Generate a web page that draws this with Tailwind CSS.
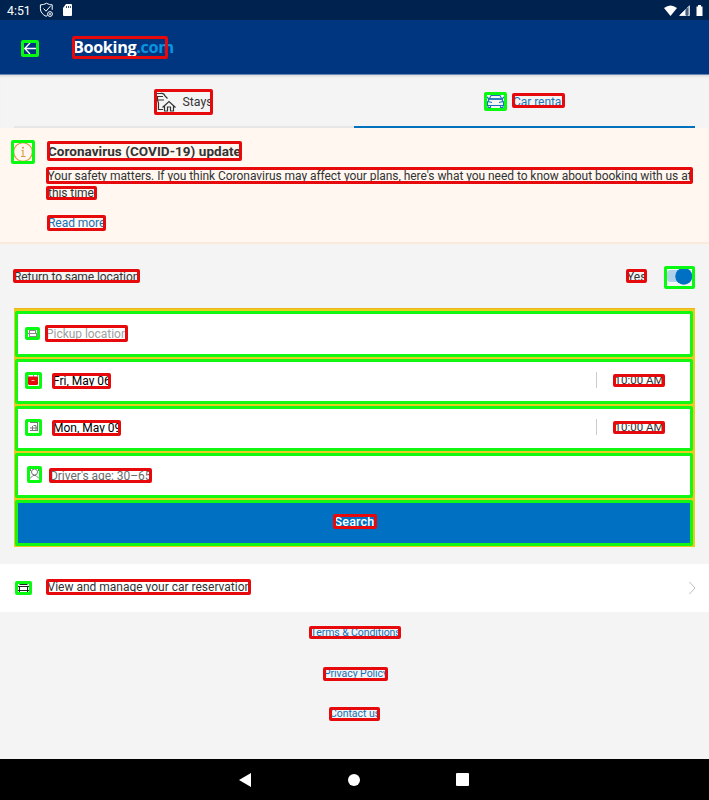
<!DOCTYPE html>
<html lang="en">
<head>
<meta charset="utf-8">
<title>Booking.com</title>
<script src="https://cdn.jsdelivr.net/npm/@tailwindcss/browser@4"></script>
</head>
<body class="w-[709px] h-[800px] overflow-hidden flex flex-col bg-[#f4f4f4] font-[Roboto,sans-serif] text-[12px] text-[#333] leading-none whitespace-nowrap">
<div class="h-5 shrink-0 bg-[#00224f] flex items-center text-white pl-[7px] pr-[6px]">
  <span class="text-[12.3px] w-[32px] pt-[2px]">4:51</span>
  <svg class="w-4 h-4" viewBox="0 0 16 16" fill="none" stroke="#fff" stroke-width="1"><path d="M7.5 1.2C5.5 2.4 3.5 2.8 1.4 2.8v4c0 3.3 2.3 5.8 5.6 7.5l1.5-.8M7.500 1.200c2 1.200 4 1.600 5.700 1.600v5M4.500 6.500l2.500 2.700 4.700-5.400"/><circle cx="11" cy="12" r="2.400"/><circle cx="11" cy="12" r=".6"/></svg>
  <svg class="w-[11px] h-3 ml-[7px]" viewBox="0 0 11 12"><path d="M4 0h5q1 0 1 1v10q0 1-1 1H2q-1 0-1-1V4z" fill="#fff"/><path d="M4.500 2v2M6.500 2v2M8.400 2v2" stroke="#00224f" stroke-width=".8"/></svg>
  <div class="flex items-center ml-auto gap-[2px]">
    <svg class="w-[13px] h-[11px]" viewBox="0 0 13 11"><path d="M0 3Q6.500-2 13 3L6.500 11z" fill="#fff"/></svg>
    <svg class="w-[11px] h-[11px]" viewBox="0 0 11 11"><path d="M10.500.7V10.500H.7z" fill="#8c9db7" stroke="#fff" stroke-width=".7"/><path d="M6 5v5.500H.5z" fill="#fff"/><path d="M8 3v8" stroke="#00224f"/></svg>
    <svg class="w-[7px] h-[11px] ml-[4px]" viewBox="0 0 7 11"><path d="M.5 1.500H2V0h3v1.500h1.500V11h-6z" fill="#fff"/></svg>
  </div>
</div>
<header class="h-[55px] shrink-0 bg-[#003580] border-b border-[#6886b5] flex items-start pl-[21px]">
  <div class="mt-5 w-[18px] h-[17px] relative after:absolute after:inset-0 after:border-3 after:rounded-xs after:border-[#08fa10]"><svg class="w-full h-full" viewBox="0 0 18 17" fill="none" stroke="#fff" stroke-width="1.300"><path d="M15.500 8.500H4M9 3L3.700 8.500 9 14"/></svg></div>
  <div class="mt-4 ml-[33px] w-24 h-[23px] flex items-center relative after:absolute after:inset-0 after:border-3 after:rounded-xs after:border-[#e60a0c]"><span class="pl-[1px] font-bold text-white text-[16.200px] tracking-[-0.350px] font-['Open_Sans',sans-serif]">Booking<span class="text-[#0896e0]">.com</span></span></div>
</header>
<nav class="h-[53px] shrink-0 flex px-[14px] shadow-[inset_0_3px_3px_-2px_#0002]">
  <div class="w-[340px] border-b-2 border-[#e6e6e6] flex pl-[140px] pt-[14px]">
    <div class="w-[59px] h-[26px] flex items-center relative after:absolute after:inset-0 after:border-3 after:rounded-xs after:border-[#e60a0c]">
      <svg class="w-6 h-[26px]" viewBox="0 0 24 26" fill="none" stroke="#333" stroke-width="1.200"><path d="M3 4.500h3q4-1 5 2.500l2.500 2.500M3 7.500h6M4 11h6M3.500 8v3l1 3v6.500H9M8.500 18.500l6.500-6 6.500 6M10.500 17v5h3v-4h3v4h3v-5"/></svg>
      <span class="ml-[4.500px] text-[12.300px]">Stays</span>
    </div>
  </div>
  <div class="w-[341px] border-b-2 border-[#0071bd] flex pl-[130px] pt-[17px] text-[#1874b8]">
    <div class="w-[23px] h-[19px] relative after:absolute after:inset-0 after:border-3 after:rounded-xs after:border-[#08fa10]"><svg class="w-full h-full" viewBox="0 0 23 19" fill="none" stroke="#1872b8" stroke-width="1.100"><path d="M5.500 6.500l1.500-3h9l1.500 3M3 5l2 2M20 5l-2 2M5 8l-1.500 2v3.500h16V10L18 8M4 9.500l4 1M19 9.500l-4 1M4 14v1.500h2.500V14M16.500 14v1.500H19V14"/><path d="M4 7h15" stroke-width="1.800"/></svg></div>
    <div class="mt-[1px] ml-[5px] w-[53px] h-[15px] relative flex items-center after:absolute after:inset-0 after:border-3 after:rounded-xs after:border-[#e60a0c]"><span class="pl-[1px] pt-[2px] tracking-[-0.050px]">Car rental</span></div>
  </div>
</nav>
<section class="h-[116px] shrink-0 bg-[#fff7f0] border-b-2 border-[#fbeada] flex pl-[11px] pt-3">
  <div class="w-6 h-6 relative after:absolute after:inset-0 after:border-3 after:rounded-xs after:border-[#08fa10]"><svg class="w-full h-full" viewBox="0 0 24 24" fill="none" stroke="#d99a45" stroke-width="1.100"><circle cx="12" cy="12" r="9.300"/><path d="M10.500 10.500H12v6M10 16.500h4.500"/><circle cx="12" cy="7.800" r=".5"/></svg></div>
  <div class="ml-[11px] flex flex-col">
    <div class="ml-px mt-px w-[195px] h-5 relative flex items-center after:absolute after:inset-0 after:border-3 after:rounded-xs after:border-[#e60a0c]"><span class="pl-[1px] pt-px text-[13.500px] tracking-[0.040px] font-bold">Coronavirus (COVID-19) update</span></div>
    <div class="mt-[6px] w-[647px] h-[17px] relative flex items-center after:absolute after:inset-0 after:border-3 after:rounded-xs after:border-[#e60a0c]"><span class="pl-[1.500px] tracking-[-0.050px]">Your safety matters. If you think Coronavirus may affect your plans, here's what you need to know about booking with us at</span></div>
    <div class="mt-[2px] w-[51px] h-[14px] relative flex items-center after:absolute after:inset-0 after:border-3 after:rounded-xs after:border-[#e60a0c]"><span class="pl-[2px] tracking-[-0.050px]">this time.</span></div>
    <div class="ml-px mt-[15px] w-[59px] h-4 relative flex items-center text-[#1670b8] after:absolute after:inset-0 after:border-3 after:rounded-xs after:border-[#e60a0c]"><span class="pl-[1px] tracking-[-0.050px]">Read more</span></div>
  </div>
</section>
<div class="h-16 shrink-0 flex items-start pl-[13px] pr-[14px]">
  <div class="mt-[25px] w-[127px] h-[14px] relative flex items-center after:absolute after:inset-0 after:border-3 after:rounded-xs after:border-[#e60a0c]"><span class="pl-[1px] pt-px tracking-[-0.080px]">Return to same location</span></div>
  <div class="mt-[25px] ml-auto w-[21px] h-[14px] relative flex items-center after:absolute after:inset-0 after:border-3 after:rounded-xs after:border-[#e60a0c]"><span class="pl-[1px] pt-px">Yes</span></div>
  <div class="mt-[22px] ml-[17px] w-[31px] h-[23px] relative flex items-center after:absolute after:inset-0 after:border-3 after:rounded-xs after:border-[#08fa10]"><svg class="w-full h-full" viewBox="0 0 31 23"><rect x="3" y="4" width="20" height="12" rx="4" fill="#b1d1ea"/><circle cx="19.800" cy="10.300" r="8.500" fill="#0071c2"/></svg></div>
</div>
<main class="ml-[14px] w-[681px] h-[239px] shrink-0 bg-[#e9cd1c] pt-[3px] pl-px pr-[2px] pb-px flex flex-col gap-[2px] border-t border-[#efb518]">
  <div class="-mt-px h-[46px] bg-white border-3 border-[#12f812] rounded-xs flex items-start pl-[7px]">
    <div class="mt-[13px] w-[15px] h-[13px] relative after:absolute after:inset-0 after:border-3 after:rounded-xs after:border-[#08fa10]"><svg class="w-full h-full" viewBox="0 0 15 13" fill="none" stroke="#888"><path d="M4 3.500h7M3 6.500h9M4 9.500h8M4.500 4v2M10.500 4v2M4.500 7v2M11.500 7v2"/></svg></div>
    <div class="mt-[11px] ml-[5px] w-[83px] h-[17px] relative flex items-center text-[#a0a0a0] after:absolute after:inset-0 after:border-3 after:rounded-xs after:border-[#e60a0c]"><span class="pl-[1px] pt-px tracking-[-0.040px]">Pickup location</span></div>
  </div>
  <div class="h-[45px] bg-white border-3 border-[#12f812] rounded-xs flex items-start pl-[7px] pr-[25px] text-black">
    <div class="mt-[10px] w-[17px] h-[17px] relative after:absolute after:inset-0 after:border-3 after:rounded-xs after:border-[#08fa10]"><svg class="w-full h-full" viewBox="0 0 17 17"><path d="M3.500 6V3.500M8.500 3v2M12.500 3v3" stroke="#999"/><rect x="3" y="4.500" width="10" height="8.500" rx="1.500" fill="#e60a0c"/><path d="M6.500 8.500h3" stroke="#f5b0b0"/></svg></div>
    <div class="mt-[11px] ml-[10px] w-[59px] h-4 relative flex items-center after:absolute after:inset-0 after:border-3 after:rounded-xs after:border-[#e60a0c]"><span class="pl-[1px]">Fri, May 06</span></div>
    <div class="mt-[10px] ml-auto mr-4 w-px h-4 bg-[#ccc]"></div>
    <div class="mt-3 w-[52px] h-[13px] relative flex items-center text-[#333] after:absolute after:inset-0 after:border-3 after:rounded-xs after:border-[#e60a0c]"><span class="pl-[1.500px] pt-px text-[11.500px]">10:00 AM</span></div>
  </div>
  <div class="h-[45px] bg-white border-3 border-[#12f812] rounded-xs flex items-start pl-[7px] pr-[25px] text-black">
    <div class="mt-[10px] w-[17px] h-[17px] relative after:absolute after:inset-0 after:border-3 after:rounded-xs after:border-[#08fa10]"><svg class="w-full h-full" viewBox="0 0 17 17" fill="none" stroke="#777"><path d="M5 3.500h8M12.500 4v8M5 11.500h8M5 9h7M8.500 6.500h2.500v5M7.500 7v4"/></svg></div>
    <div class="mt-[11px] ml-[10px] w-[69px] h-4 relative flex items-center after:absolute after:inset-0 after:border-3 after:rounded-xs after:border-[#e60a0c]"><span class="pl-[1px]">Mon, May 09</span></div>
    <div class="mt-[10px] ml-auto mr-4 w-px h-4 bg-[#ccc]"></div>
    <div class="mt-3 w-[52px] h-[13px] relative flex items-center text-[#333] after:absolute after:inset-0 after:border-3 after:rounded-xs after:border-[#e60a0c]"><span class="pl-[1.500px] pt-px text-[11.500px]">10:00 AM</span></div>
  </div>
  <div class="h-[45px] bg-white border-3 border-[#12f812] rounded-xs flex items-start pl-[9px]">
    <div class="mt-[10px] w-[15px] h-[17px] relative after:absolute after:inset-0 after:border-3 after:rounded-xs after:border-[#08fa10]"><svg class="w-full h-full" viewBox="0 0 15 17" fill="none" stroke="#777"><circle cx="7.500" cy="6" r="3"/><path d="M3 12.500l3-3h3l3 3M3.500 3v2M11.500 3v2"/></svg></div>
    <div class="mt-3 ml-[7px] w-[103px] h-[15px] relative flex items-center text-[#6b6b6b] after:absolute after:inset-0 after:border-3 after:rounded-xs after:border-[#e60a0c]"><span class="pl-[1px] tracking-[-0.040px]">Driver's age: 30–65</span></div>
  </div>
  <div class="h-[46px] bg-[#0071c2] border-3 border-[#12f812] rounded-xs flex items-start pl-[315px]">
    <div class="mt-[11px] w-11 h-[15px] relative flex items-center text-white font-medium after:absolute after:inset-0 after:border-3 after:rounded-xs after:border-[#e60a0c]"><span class="pl-[1.500px] pt-[2px] text-[12.500px] tracking-[0.200px]">Search</span></div>
  </div>
</main>
<div class="mt-[17px] h-12 shrink-0 bg-white flex items-start pl-[15px] pr-[13px]">
  <div class="mt-[17px] w-[17px] h-[14px] relative after:absolute after:inset-0 after:border-3 after:rounded-xs after:border-[#08fa10]"><svg class="w-full h-full" viewBox="0 0 17 14" fill="none" stroke="#222"><path d="M4.500 3.500h8M3 5.500h11M4.500 6v3M12.500 6v3M3 9.500h11M4.500 10v1M12.500 10v1"/></svg></div>
  <div class="mt-[15px] ml-[14px] w-[205px] h-4 relative flex items-center after:absolute after:inset-0 after:border-3 after:rounded-xs after:border-[#e60a0c]"><span class="pl-[1.500px]">View and manage your car reservation</span></div>
  <svg class="mt-[17px] ml-auto w-[7px] h-[14px]" viewBox="0 0 7 14" fill="none" stroke="#bbb"><path d="M.5 1l5.500 6L.5 13"/></svg>
</div>
<footer class="grow flex flex-col items-start pl-[309px] pt-[14px] text-[#1670b8] text-[10.500px]">
  <div class="w-[92px] h-[13px] relative flex items-center after:absolute after:inset-0 after:border-3 after:rounded-xs after:border-[#e60a0c]"><span class="pl-[1.500px] pt-px tracking-[-0.080px]">Terms &amp; Conditions</span></div>
  <div class="ml-[14px] mt-7 w-[65px] h-[14px] relative flex items-center after:absolute after:inset-0 after:border-3 after:rounded-xs after:border-[#e60a0c]"><span class="pl-[1px] tracking-[-0.050px]">Privacy Policy</span></div>
  <div class="ml-5 mt-[26px] w-[51px] h-[14px] relative flex items-center after:absolute after:inset-0 after:border-3 after:rounded-xs after:border-[#e60a0c]"><span class="pl-[1px] pt-px tracking-[-0.050px]">Contact us</span></div>
</footer>
<div class="h-[41px] shrink-0 bg-black flex items-center pl-[239px]">
  <svg class="w-3 h-[14px]" viewBox="0 0 12 14"><path d="M12 0v14L0 7z" fill="#fff"/></svg>
  <div class="ml-[97px] w-3 h-3 rounded-full bg-white"></div>
  <div class="ml-24 w-[13px] h-[13px] rounded-[1px] bg-white"></div>
</div>
</body>
</html>
